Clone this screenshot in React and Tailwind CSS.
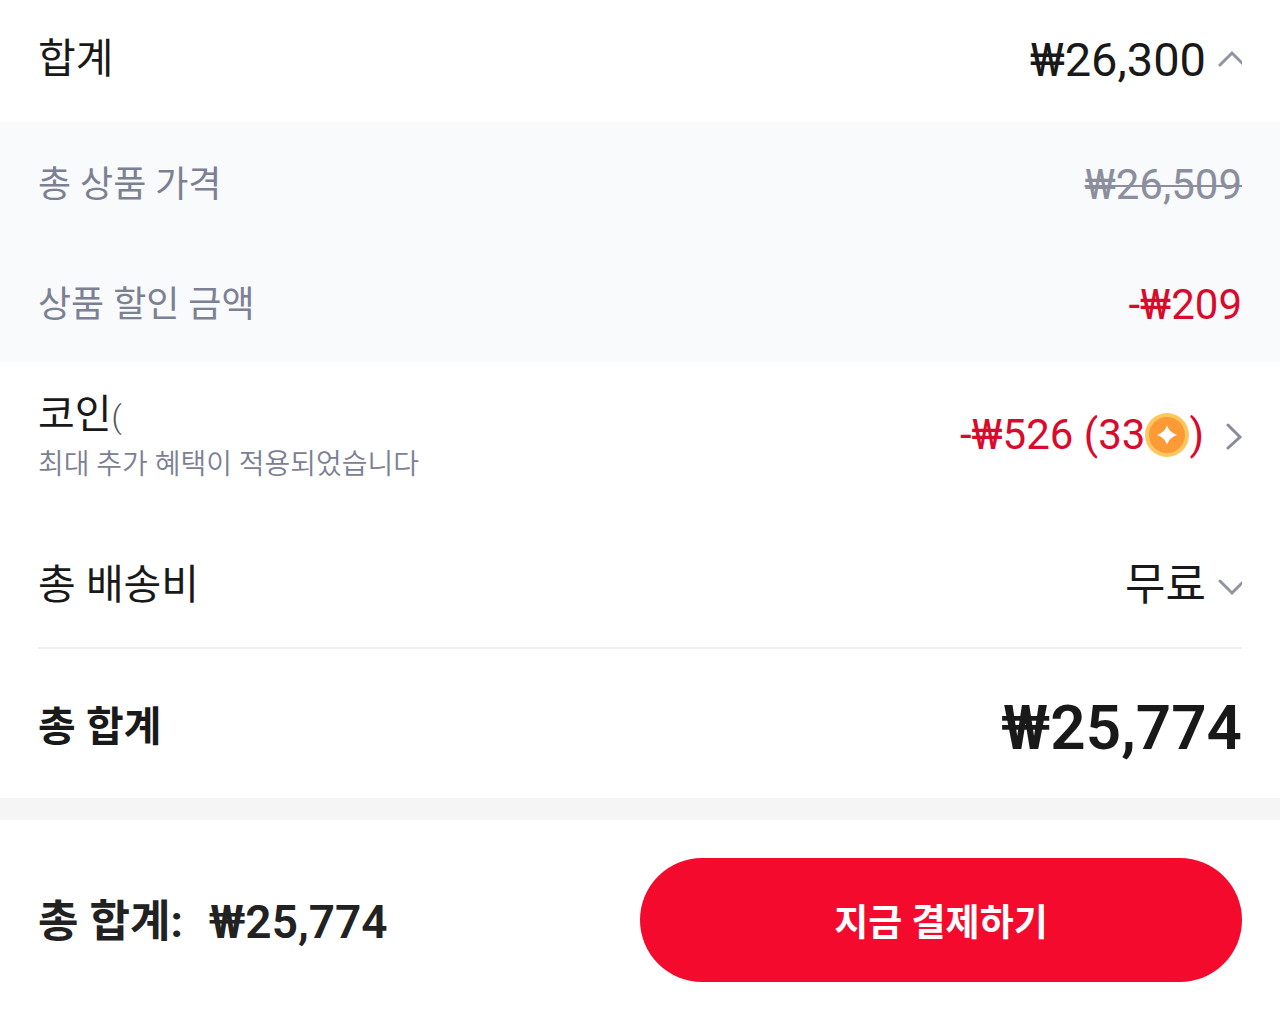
import React, { useState } from "react";

const FONT = "font-[Roboto,'Noto_Sans_CJK_KR',sans-serif]";

const UP = "M2 19 L14 7 L26 19";
const DOWN = "M2 9 L14 21 L26 9";

function Chevron({ d }) {
  return (
    <svg
      viewBox="0 0 24 26"
      className="h-[26px] w-6 shrink-0 text-[#9093a2]"
      fill="none"
      stroke="currentColor"
      strokeWidth="3"
      strokeLinecap="round"
      aria-hidden="true"
    >
      <path d={d} />
    </svg>
  );
}

function ChevronRight() {
  return (
    <svg
      viewBox="0 0 16 30"
      className="ml-[22px] h-[30px] w-4 shrink-0 text-[#888c9c]"
      fill="none"
      stroke="currentColor"
      strokeWidth="3"
      strokeLinecap="round"
      aria-hidden="true"
    >
      <path d="M2 5 L14 17 L2 28" />
    </svg>
  );
}

function Coin() {
  return (
    <svg viewBox="0 0 44 44" className="h-11 w-11 shrink-0" role="img" aria-label="코인">
      <circle cx="22" cy="22" r="22" fill="#fdc75e" />
      <circle cx="22" cy="22" r="18" fill="#fc9a35" />
      <path d="M22 12.5 Q24.5 19.5 32 22 Q24.5 24.5 22 31.5 Q19.5 24.5 12 22 Q19.5 19.5 22 12.5Z" fill="#fff" />
    </svg>
  );
}

export default function App() {
  const [open, setOpen] = useState(true);

  return (
    <main className={`${FONT} min-h-screen bg-white text-[#191919]`}>
      {/* Subtotal */}
      <section>
        <div className="flex h-[122px] items-center justify-between px-[38px]">
          <h2 className="pb-1 text-[41px] leading-none">합계</h2>
          <button
            type="button"
            aria-expanded={open}
            onClick={() => setOpen(!open)}
            className="flex items-center gap-3 pb-1 text-[47px] leading-none"
          >
            ₩26,300
            <Chevron d={open ? UP : DOWN} />
          </button>
        </div>

        {open && (
          <dl className="bg-[#f9fafc] px-[38px] text-[#7c8093]">
            <div className="flex h-[120px] items-center justify-between pt-1.5">
              <dt className="text-[36px] leading-none">총 상품 가격</dt>
              <dd className="text-[42px] leading-none line-through decoration-2 text-[#8b8e9c]">₩26,509</dd>
            </div>
            <div className="flex h-[120px] items-center justify-between pt-1.5">
              <dt className="text-[36px] leading-none">상품 할인 금액</dt>
              <dd className="text-[42px] leading-none text-[#d90b2c]">-₩209</dd>
            </div>
          </dl>
        )}
      </section>

      {/* Coins and shipping */}
      <section className="px-[38px]">
        <div className="flex h-[148px] items-center justify-between">
          <div>
            <h2 className="text-[40px] leading-[56px]">
              코인<span className="text-[32px] font-light text-[#555]">(</span>
            </h2>
            <p className="text-[28px] leading-10 font-[350] text-[#7c8093]">최대 추가 혜택이 적용되었습니다</p>
          </div>
          <button type="button" className="flex items-center pb-0.5 text-[42px] leading-none text-[#d90b2c]">
            -₩526 (33
            <Coin />)
            <ChevronRight />
          </button>
        </div>
        <div className="flex h-[139px] items-end justify-between border-b-2 border-[#f0f0f0] pb-10">
          <h2 className="text-[41px] leading-[44px]">총 배송비</h2>
          <button type="button" className="flex items-center gap-3 text-[44px] leading-[44px]">
            무료
            <Chevron d={DOWN} />
          </button>
        </div>
        <div className="flex h-[149px] items-center justify-between pt-2">
          <h2 className="text-[41px] leading-none font-bold">총 합계</h2>
          <strong className="text-[62px] leading-none font-semibold">₩25,774</strong>
        </div>
      </section>

      {/* Pay bar */}
      <footer className="border-t-[22px] border-[#f5f5f5]">
        <div className="flex items-center px-[38px] py-[38px]">
          <p className="flex flex-1 items-center gap-[26px] pt-1 text-[#222]">
            <span className="text-[44px] leading-none font-bold">총 합계:</span>
            <span className="text-[46px] leading-none font-semibold">₩25,774</span>
          </p>
          <button type="button" className="h-[124px] w-1/2 rounded-full bg-[#f40a2c] pt-2 text-[37px] font-bold text-white">
            지금 결제하기
          </button>
        </div>
      </footer>
    </main>
  );
}
